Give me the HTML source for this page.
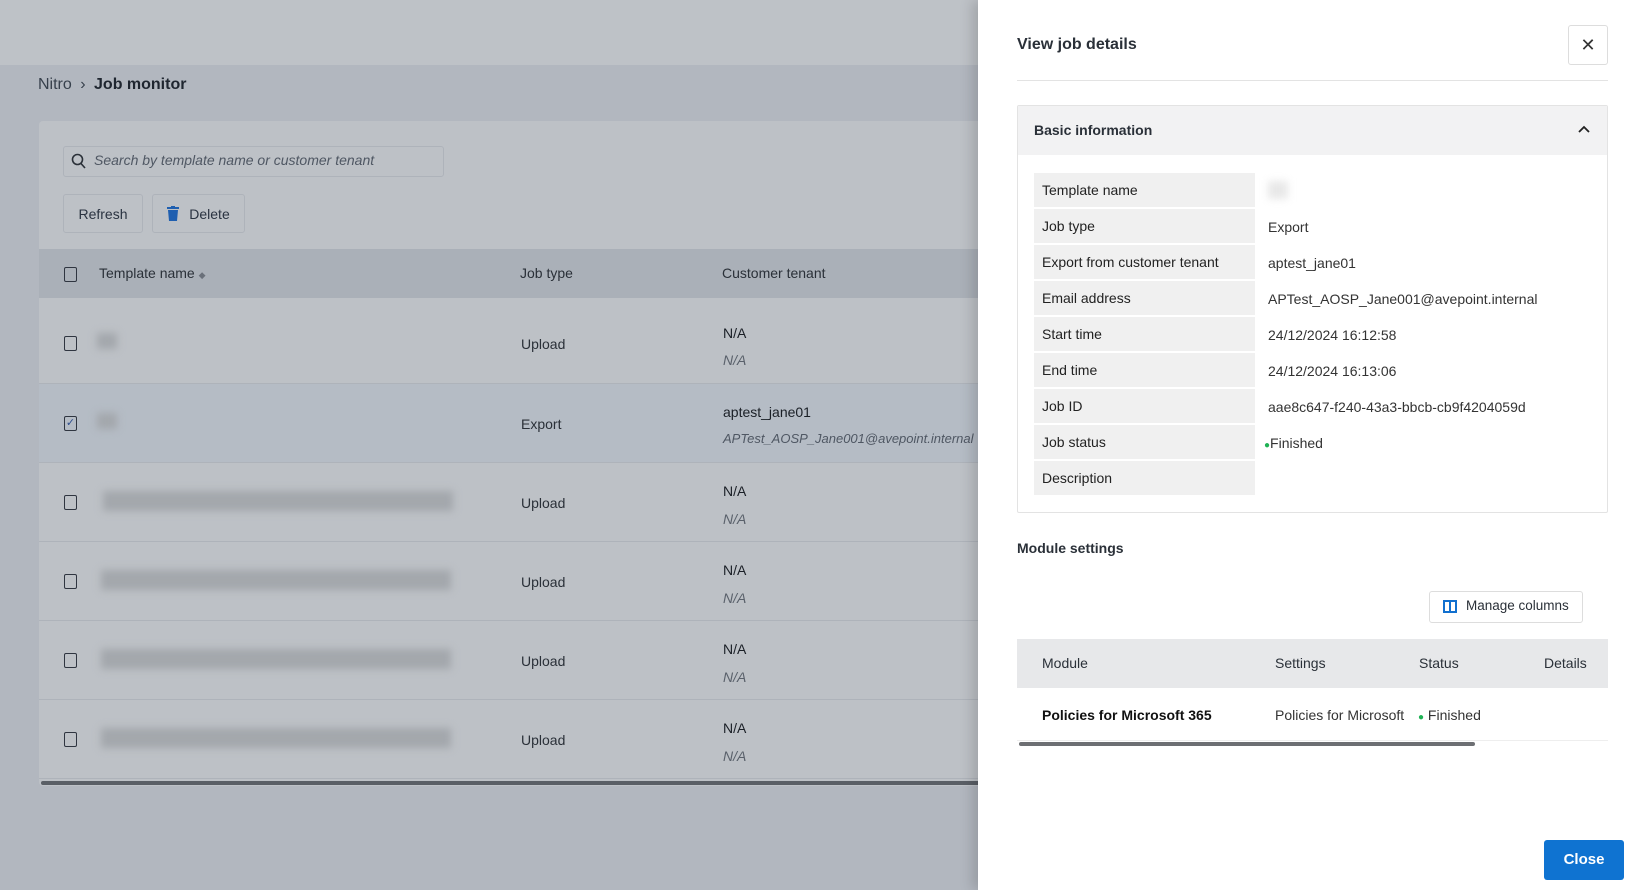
<!DOCTYPE html>
<html><head><meta charset="utf-8"><style>
*{box-sizing:border-box;margin:0;padding:0}
body{width:1646px;height:890px;overflow:hidden;position:relative;background:#b2b7bf;font-family:"Liberation Sans",sans-serif;font-size:14px;color:#2a3038}
.abs{position:absolute}
.top{left:0;top:0;width:983px;height:65px;background:#bec2c7}
.card{left:39px;top:121px;width:960px;height:665px;background:#bdc1c6;border-radius:4px}
.btn{border:1px solid #aeb3ba;border-radius:3px;background:#bdc1c6;display:flex;align-items:center;justify-content:center;color:#2a3341}
.cb{width:13px;height:15px;border:1.5px solid #2f3540;border-radius:2px;background:transparent}
.row{left:39px;width:960px;border-bottom:1px solid #aeb3ba}
.blur{background:#a3a7ac;filter:blur(4px);height:20px}
.panel{left:978px;top:0;width:668px;height:890px;background:#fff;box-shadow:-6px 0 12px rgba(0,0,0,.15)}
.lbl{left:1040px;width:221px;height:34px;background:#f0f0f0;padding-left:8px;line-height:34px;color:#222}
.val{left:1274px;line-height:34px;color:#333}
#p{position:absolute;left:-6px;top:0;width:1646px;height:890px}
</style></head><body>
<div class="abs top"></div>
<div class="abs" style="left:38px;top:76px;font-size:16px;color:#37404c">Nitro <span style="margin:0 4px">›</span> <b style="color:#1f2630">Job monitor</b></div>
<div class="abs card"></div>
<div class="abs" style="left:63px;top:146px;width:381px;height:31px;border:1px solid #aeb3ba;border-radius:3px"></div>
<svg class="abs" style="left:71px;top:153px" width="16" height="17" viewBox="0 0 16 17"><circle cx="6.5" cy="6.5" r="5" fill="none" stroke="#2a3038" stroke-width="1.6"/><path d="M10 10.5l4 4.5" stroke="#2a3038" stroke-width="1.6"/></svg>
<div class="abs" style="left:94px;top:152px;font-style:italic;color:#4f5763;font-size:14px">Search by template name or customer tenant</div>
<div class="abs btn" style="left:63px;top:194px;width:80px;height:39px">Refresh</div>
<div class="abs btn" style="left:152px;top:194px;width:93px;height:39px"><svg width="12" height="15" viewBox="0 0 12 15" style="margin-right:10px"><rect x="0" y="1" width="12" height="2" fill="#1f5fb0"/><rect x="4" y="0" width="4" height="2" fill="#1f5fb0"/><path d="M1 4h10l-1 11H2z" fill="#1f5fb0"/></svg>Delete</div>
<div class="abs" style="left:39px;top:249px;width:944px;height:49px;background:#aab0b8"></div>
<div class="abs cb" style="left:64px;top:267px"></div>
<div class="abs" style="left:99px;top:265px;color:#2a3038">Template name <span style="font-size:9px;color:#6a707a">◆</span></div>
<div class="abs" style="left:520px;top:265px">Job type</div>
<div class="abs" style="left:722px;top:265px">Customer tenant</div>

<div class="abs row" style="top:298px;height:86px"></div>
<div class="abs row" style="top:384px;height:79px;background:#b5bcc5"></div>
<div class="abs row" style="top:463px;height:79px"></div>
<div class="abs row" style="top:542px;height:79px"></div>
<div class="abs row" style="top:621px;height:79px"></div>
<div class="abs row" style="top:700px;height:79px"></div>
<div class="abs" style="left:41px;top:781px;width:942px;height:4px;background:#5a5f66;border-radius:2px"></div>

<div class="abs cb" style="left:64px;top:336px"></div><div class="abs blur" style="left:97px;top:333px;width:20px;height:16px"></div>
<div class="abs" style="left:521px;top:336px">Upload</div><div class="abs" style="left:723px;top:325px;color:#1a1f26">N/A</div><div class="abs" style="left:723px;top:352px;font-style:italic;color:#5a616b">N/A</div>

<div class="abs cb" style="left:64px;top:416px;text-align:center;font-size:11px;line-height:12px;color:#2f4f8f">✓</div><div class="abs blur" style="left:97px;top:413px;width:20px;height:16px"></div>
<div class="abs" style="left:521px;top:416px">Export</div><div class="abs" style="left:723px;top:404px;color:#1a1f26">aptest_jane01</div><div class="abs" style="left:723px;top:431px;font-style:italic;color:#4f5763;font-size:13px">APTest_AOSP_Jane001@avepoint.internal</div>

<div class="abs cb" style="left:64px;top:495px"></div><div class="abs blur" style="left:103px;top:491px;width:350px"></div>
<div class="abs" style="left:521px;top:495px">Upload</div><div class="abs" style="left:723px;top:483px;color:#1a1f26">N/A</div><div class="abs" style="left:723px;top:511px;font-style:italic;color:#5a616b">N/A</div>
<div class="abs cb" style="left:64px;top:574px"></div><div class="abs blur" style="left:101px;top:570px;width:350px"></div>
<div class="abs" style="left:521px;top:574px">Upload</div><div class="abs" style="left:723px;top:562px;color:#1a1f26">N/A</div><div class="abs" style="left:723px;top:590px;font-style:italic;color:#5a616b">N/A</div>
<div class="abs cb" style="left:64px;top:653px"></div><div class="abs blur" style="left:101px;top:649px;width:350px"></div>
<div class="abs" style="left:521px;top:653px">Upload</div><div class="abs" style="left:723px;top:641px;color:#1a1f26">N/A</div><div class="abs" style="left:723px;top:669px;font-style:italic;color:#5a616b">N/A</div>
<div class="abs cb" style="left:64px;top:732px"></div><div class="abs blur" style="left:101px;top:728px;width:350px"></div>
<div class="abs" style="left:521px;top:732px">Upload</div><div class="abs" style="left:723px;top:720px;color:#1a1f26">N/A</div><div class="abs" style="left:723px;top:748px;font-style:italic;color:#5a616b">N/A</div>

<div class="abs panel"></div>
<div id="p">
<div class="abs" style="left:1023px;top:36px;font-size:16px;font-weight:bold;color:#2a3038">View job details</div>
<div class="abs" style="left:1574px;top:25px;width:40px;height:40px;border:1px solid #ddd;border-radius:3px;text-align:center;line-height:38px;font-size:18px;color:#333">✕</div>
<div class="abs" style="left:1023px;top:80px;width:591px;height:1px;background:#e3e3e3"></div>
<div class="abs" style="left:1023px;top:105px;width:591px;height:408px;border:1px solid #e3e3e3;border-radius:2px"></div>
<div class="abs" style="left:1024px;top:106px;width:589px;height:49px;background:#f2f2f3"></div>
<div class="abs" style="left:1040px;top:122px;font-weight:bold;color:#2a3038">Basic information</div>
<svg class="abs" style="left:1583px;top:124px" width="14" height="10" viewBox="0 0 14 10"><path d="M2 8l5-5 5 5" fill="none" stroke="#222" stroke-width="1.8"/></svg>

<div class="abs lbl" style="top:173px">Template name</div><div class="abs blur" style="left:1274px;top:181px;width:20px;height:18px;background:#e8e8e8"></div>
<div class="abs lbl" style="top:209px">Job type</div><div class="abs val" style="top:210px">Export</div>
<div class="abs lbl" style="top:245px">Export from customer tenant</div><div class="abs val" style="top:246px">aptest_jane01</div>
<div class="abs lbl" style="top:281px">Email address</div><div class="abs val" style="top:282px">APTest_AOSP_Jane001@avepoint.internal</div>
<div class="abs lbl" style="top:317px">Start time</div><div class="abs val" style="top:318px">24/12/2024 16:12:58</div>
<div class="abs lbl" style="top:353px">End time</div><div class="abs val" style="top:354px">24/12/2024 16:13:06</div>
<div class="abs lbl" style="top:389px">Job ID</div><div class="abs val" style="top:390px">aae8c647-f240-43a3-bbcb-cb9f4204059d</div>
<div class="abs lbl" style="top:425px">Job status</div><div class="abs val" style="top:426px;left:1270px"><span style="color:#1fb254;font-size:10px">●</span>Finished</div>
<div class="abs lbl" style="top:461px">Description</div>

<div class="abs" style="left:1023px;top:540px;font-weight:bold;color:#2a3038">Module settings</div>
<div class="abs" style="left:1435px;top:591px;width:154px;height:32px;border:1px solid #ddd;border-radius:3px"></div>
<svg class="abs" style="left:1449px;top:600px" width="14" height="13" viewBox="0 0 14 13"><rect x="1" y="1" width="12" height="11" fill="none" stroke="#1170cf" stroke-width="2"/><path d="M7 1v11" stroke="#1170cf" stroke-width="2"/></svg>
<div class="abs" style="left:1472px;top:598px;font-size:13.5px;color:#2a3038">Manage columns</div>
<div class="abs" style="left:1023px;top:639px;width:591px;height:49px;background:#e7e8ea"></div>
<div class="abs" style="left:1048px;top:655px">Module</div>
<div class="abs" style="left:1281px;top:655px">Settings</div>
<div class="abs" style="left:1425px;top:655px">Status</div>
<div class="abs" style="left:1550px;top:655px">Details</div>
<div class="abs" style="left:1048px;top:707px;font-weight:bold;color:#111">Policies for Microsoft 365</div>
<div class="abs" style="left:1281px;top:707px;color:#333">Policies for Microsoft</div>
<div class="abs" style="left:1424px;top:707px;color:#333"><span style="color:#1fb254;font-size:10px">●</span> Finished</div>
<div class="abs" style="left:1023px;top:740px;width:591px;height:1px;background:#eee"></div>
<div class="abs" style="left:1025px;top:742px;width:456px;height:4px;background:#6d6f73;border-radius:2px"></div>
<div class="abs" style="left:1550px;top:840px;width:80px;height:40px;background:#0f73d1;border-radius:3px;color:#fff;font-weight:bold;text-align:center;line-height:40px;font-size:15px">Close</div>
</div>
</body></html>
